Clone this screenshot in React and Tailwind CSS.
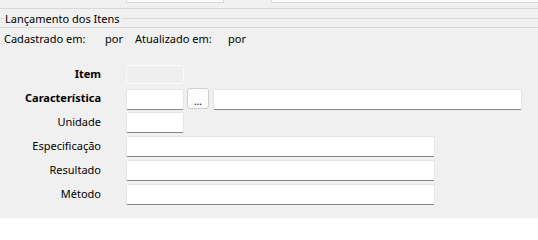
const fieldBase = 'h-[21px] bg-white border border-[#e5e5e5] border-b-[#868686] rounded-[2px]';

function Field({ width }) {
    return <div className={`${fieldBase} ${width}`} />;
}

function Label({ children, bold }) {
    return (
        <div className={`w-[101px] shrink-0 text-right ${bold ? 'font-bold' : ''}`}>{children}</div>
    );
}

export default function App() {
    return (
        <div
            className="h-[218px] w-full overflow-hidden bg-[#f0f0f0] text-[11px] text-black"
            style={{ fontFamily: '"Noto Sans", sans-serif' }}
        >
            {/* bottom of the fields from the section above */}
            <div className="flex h-[8px] items-start">
                <div className="ml-[126px] h-[3px] w-[98px] border-x border-b border-[#d9d9d9] bg-[#f9f9f9]" />
                <div className="ml-[47px] h-[3px] flex-1 border-l border-b border-[#d9d9d9] bg-[#f9f9f9]" />
            </div>
            <div className="h-px bg-[#d9d9d9]" />

            <div className="flex h-[18px] items-center">
                <div className="h-px w-[4px] bg-[#d9d9d9]" />
                <span className="px-[1px] leading-none">Lançamento dos Itens</span>
                <div className="ml-[2px] h-px flex-1 bg-[#d9d9d9]" />
            </div>
            <div className="h-px bg-[#d9d9d9]" />

            <div className="flex h-[22px] items-center pl-[4px]">
                <span className="w-[101px]">Cadastrado em:</span>
                <span className="w-[30px]">por</span>
                <span className="w-[93px]">Atualizado em:</span>
                <span>por</span>
            </div>

            <div className="mt-[14px] flex flex-col gap-[3px]">
                <div className="flex h-[21px] items-center gap-[25px]">
                    <Label bold>Item</Label>
                    <div className="h-[19px] w-[58px] border border-[#fafafa] bg-[#efefef] rounded-[2px]" />
                </div>
                <div className="flex h-[21px] items-center gap-[25px]">
                    <Label bold>Característica</Label>
                    <div className="flex items-center">
                        <div className={`${fieldBase} w-[58px] h-[20px] mt-[1px]`} />
                        <button
                            type="button"
                            className="ml-[3px] flex h-[21px] w-[22px] items-end justify-center rounded-[3px] border border-[#cfcfcf] bg-[#fdfdfd] pb-[2px] text-[10px] leading-none"
                        >
                            ...
                        </button>
                        <div className={`${fieldBase} ml-[4px] w-[309px] h-[20px] mt-[1px]`} />
                    </div>
                </div>
                <div className="flex h-[21px] items-center gap-[25px]">
                    <Label>Unidade</Label>
                    <Field width="w-[58px]" />
                </div>
                <div className="flex h-[21px] items-center gap-[25px]">
                    <Label>Especificação</Label>
                    <Field width="w-[309px]" />
                </div>
                <div className="flex h-[21px] items-center gap-[25px]">
                    <Label>Resultado</Label>
                    <Field width="w-[309px]" />
                </div>
                <div className="flex h-[21px] items-center gap-[25px]">
                    <Label>Método</Label>
                    <Field width="w-[309px]" />
                </div>
            </div>
        </div>
    );
}
